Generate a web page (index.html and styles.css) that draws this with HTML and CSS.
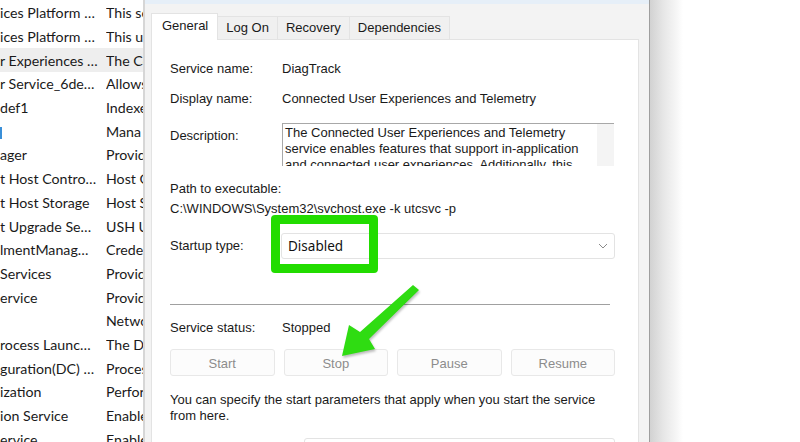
FILE: index.html
```html
<!DOCTYPE html>
<html lang="en">
<head>
    <meta charset="UTF-8">
    <title>Service Properties</title>
    <link rel="stylesheet" href="styles.css">
</head>
<body>
    <div class="screen">
        <div class="list">
            <div class="row"><span class="name">ices Platform …</span><span class="desc">This se</span></div>
            <div class="row"><span class="name">ices Platform …</span><span class="desc">This u</span></div>
            <div class="row selected"><span class="name">r Experiences …</span><span class="desc">The Co</span></div>
            <div class="row"><span class="name">r Service_6de…</span><span class="desc">Allows</span></div>
            <div class="row"><span class="name">def1</span><span class="desc">Indexe</span></div>
            <div class="row"><span class="name"><i class="caret"></i></span><span class="desc">Mana</span></div>
            <div class="row"><span class="name">ager</span><span class="desc">Provid</span></div>
            <div class="row"><span class="name">t Host Contro…</span><span class="desc">Host C</span></div>
            <div class="row"><span class="name">t Host Storage</span><span class="desc">Host S</span></div>
            <div class="row"><span class="name">t Upgrade Se…</span><span class="desc">USH U</span></div>
            <div class="row"><span class="name">lmentManag…</span><span class="desc">Crede</span></div>
            <div class="row"><span class="name">Services</span><span class="desc">Provid</span></div>
            <div class="row"><span class="name">ervice</span><span class="desc">Provid</span></div>
            <div class="row"><span class="name"></span><span class="desc">Netwo</span></div>
            <div class="row"><span class="name">rocess Launc…</span><span class="desc">The D</span></div>
            <div class="row"><span class="name">guration(DC) …</span><span class="desc">Proces</span></div>
            <div class="row"><span class="name">ization</span><span class="desc">Perfor</span></div>
            <div class="row"><span class="name">ion Service</span><span class="desc">Enable</span></div>
            <div class="row"><span class="name">ervice</span><span class="desc">Enable</span></div>
        </div>

        <div class="dialog">
            <div class="dialog-top"></div>
            <div class="tabs">
                <span class="tab active">General</span>
                <span class="tab">Log On</span>
                <span class="tab">Recovery</span>
                <span class="tab">Dependencies</span>
            </div>
            <div class="panel">
                <div class="field first">
                    <span class="label">Service name:</span>
                    <span>DiagTrack</span>
                </div>
                <div class="field">
                    <span class="label">Display name:</span>
                    <span>Connected User Experiences and Telemetry</span>
                </div>
                <div class="field desc-field">
                    <span class="label">Description:</span>
                    <div class="desc-box">
                        <p>The Connected User Experiences and Telemetry service enables features that support in-application and connected user experiences. Additionally, this service manages the event driven collection and transmission of diagnostic information.</p>
                        <div class="scrollbar"></div>
                    </div>
                </div>
                <div class="path-label">Path to executable:</div>
                <div class="path">C:\WINDOWS\System32\svchost.exe -k utcsvc -p</div>
                <div class="field startup">
                    <span class="label">Startup type:</span>
                    <div class="select">
                        <span>Disabled</span>
                        <svg width="10" height="6" viewBox="0 0 10 6"><path d="M1 1l4 4 4-4" fill="none" stroke="#8a8a8a" stroke-width="1"/></svg>
                    </div>
                </div>
                <div class="separator"></div>
                <div class="field status">
                    <span class="label">Service status:</span>
                    <span>Stopped</span>
                </div>
                <div class="buttons">
                    <span class="btn">Start</span>
                    <span class="btn">Stop</span>
                    <span class="btn">Pause</span>
                    <span class="btn">Resume</span>
                </div>
                <p class="hint">You can specify the start parameters that apply when you start the service from here.</p>
                <div class="params"></div>
            </div>
        </div>
        <div class="edge"></div>
    </div>

    <div class="mark-box"></div>
    <svg class="arrow" width="800" height="442" viewBox="0 0 800 442">
        <polygon points="413,285 419,290 369,339 375,349 342,356 349,325 360,332" fill="#2fdc12"/>
    </svg>
</body>
</html>
```

FILE: styles.css
```css
*{
    margin: 0;
    padding: 0;
    box-sizing: border-box;
}

body{
    width: 800px;
    height: 442px;
    overflow: hidden;
    background: #fff;
    font-family: "Liberation Sans", Arial, sans-serif;
    font-size: 13px;
    color: #1a1a1a;
}

.screen{
    display: flex;
    height: 442px;
    overflow: hidden;
}

/* services list behind the dialog */
.list{
    width: 145px;
    flex-shrink: 0;
    padding-top: 1px;
    overflow: hidden;
    font-family: Lato, "Noto Sans", sans-serif;
    font-size: 14.2px;
    border-right: 2px solid #d6d6d6;
}

.row{
    display: flex;
    align-items: center;
    height: 23.7px;
    white-space: nowrap;
}

.row.selected{
    background: #eeeeee;
}

.name{
    width: 106px;
    flex-shrink: 0;
    overflow: hidden;
}

.desc{
    overflow: hidden;
}

.caret{
    display: inline-block;
    width: 2px;
    height: 12px;
    background: #3a8fd8;
    vertical-align: middle;
}

/* properties dialog */
.dialog{
    width: 505px;
    flex-shrink: 0;
    background: #f3f3f3;
    border-right: 1px solid #9e9e9e;
    padding: 0 9px 0 6px;
    display: flex;
    flex-direction: column;
    overflow: hidden;
}

.dialog-top{
    flex-shrink: 0;
    height: 4px;
    margin: 0 -9px 0 -6px;
    background: #e6eff8;
}

.tabs{
    flex-shrink: 0;
    display: flex;
    align-items: flex-end;
    margin-top: 9px;
    height: 26px;
}

.tab{
    height: 23px;
    line-height: 21px;
    padding: 0 8px;
    background: #f0f0f0;
    border: 1px solid #e3e3e3;
    border-bottom: none;
    margin-left: -1px;
}

.tab.active{
    height: 27px;
    line-height: 24px;
    padding: 0 9px 0 10px;
    background: #fff;
    margin-left: 0;
    margin-bottom: -1px;
    position: relative;
    z-index: 1;
}

.panel{
    flex: 1;
    min-height: 0;
    background: #fff;
    border: 1px solid #e3e3e3;
    border-bottom: none;
    padding-left: 18px;
    width: 488px;
    overflow: hidden;
}

.field{
    display: flex;
    line-height: 16px;
    margin-top: 14px;
}

.field.first{
    margin-top: 21px;
}

.label{
    width: 112px;
    flex-shrink: 0;
}

.desc-field{
    margin-top: 16px;
}

.desc-field .label{
    padding-top: 5px;
}

.desc-box{
    position: relative;
    width: 332px;
    height: 43px;
    overflow: hidden;
    border-top: 1px solid #a8a8a8;
    border-left: 1px solid #a8a8a8;
    padding: 1px 20px 0 2px;
}

.desc-box p{
    line-height: 16px;
}

.scrollbar{
    position: absolute;
    top: 0;
    right: 0;
    width: 17px;
    height: 100%;
    background: #f4f4f4;
}

.path-label{
    margin-top: 15px;
    line-height: 16px;
}

.path{
    margin-top: 4px;
    line-height: 16px;
}

.startup{
    margin-top: 16px;
    align-items: center;
}

.startup .label{
    width: 111px;
}

.select{
    width: 334px;
    height: 26px;
    border: 1px solid #e3e3e3;
    border-radius: 3px;
    display: flex;
    align-items: center;
    justify-content: space-between;
    padding: 0 6px 0 6px;
    font-family: "Noto Sans", sans-serif;
    font-size: 13.5px;
    color: #111;
}

.separator{
    width: 440px;
    height: 1px;
    background: #a0a0a0;
    margin-top: 45px;
}

.status{
    margin-top: 15px;
}

.buttons{
    display: grid;
    grid-template-columns: repeat(4, 1fr);
    gap: 9px;
    width: 445px;
    margin-top: 13px;
}

.btn{
    height: 27px;
    line-height: 27px;
    text-align: center;
    color: #8c8c8c;
    background: #fcfcfc;
    border: 1px solid #e8e8e8;
    border-radius: 3px;
}

.hint{
    margin-top: 16px;
    width: 445px;
    line-height: 16px;
}

.params{
    margin: 14px 0 0 134px;
    width: 311px;
    height: 26px;
    border: 1px solid #e3e3e3;
    border-radius: 3px;
}

.edge{
    width: 33px;
    flex-shrink: 0;
    background: linear-gradient(to right, #d2d2d2, #e6e6e6 40%, #f6f6f6 80%, #fff);
}

/* annotation overlays */
.mark-box{
    position: absolute;
    left: 271px;
    top: 215px;
    width: 107px;
    height: 58px;
    border: 9px solid #22dc00;
    border-radius: 4px;
}

.arrow{
    position: absolute;
    left: 0;
    top: 0;
    filter: drop-shadow(1px 2px 1px rgba(0, 0, 0, 0.25));
}
```
